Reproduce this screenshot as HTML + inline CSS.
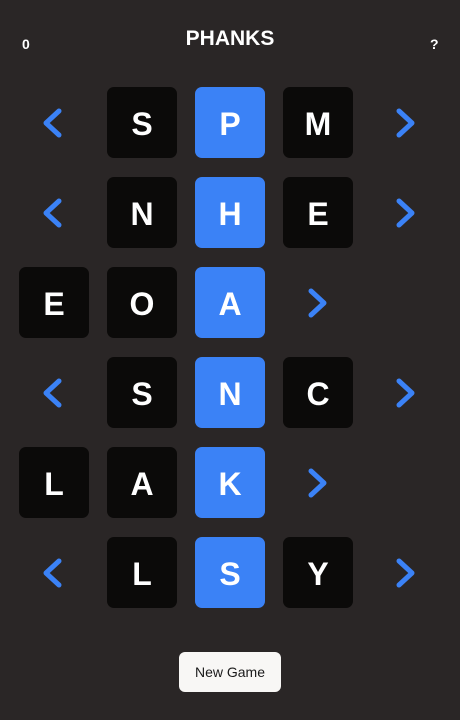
<!DOCTYPE html>
<html><head><style>
body{margin:0;width:460px;height:720px;background:#2a2626;position:relative;overflow:hidden;font-family:"Liberation Sans",sans-serif;color:#fff}
.t{position:absolute;width:70px;height:71px;border-radius:7px;background:#0b0a09;display:flex;align-items:center;justify-content:center;font-size:32px;font-weight:bold;color:#fff;padding-top:4px;box-sizing:border-box}
.b{background:#3b82f6}
svg{position:absolute}
.h{position:absolute;font-weight:bold}
</style></head><body>
<div class="h" style="left:22px;top:36px;font-size:14px">0</div>
<div class="h" style="left:0;width:460px;text-align:center;top:27px;font-size:21px">PHANKS</div>
<div class="h" style="left:430px;top:36px;font-size:14px">?</div>

<div class="t" style="left:107px;top:87px">S</div><div class="t b" style="left:195px;top:87px">P</div><div class="t" style="left:283px;top:87px">M</div>
<div class="t" style="left:107px;top:177px">N</div><div class="t b" style="left:195px;top:177px">H</div><div class="t" style="left:283px;top:177px">E</div>
<div class="t" style="left:19px;top:267px">E</div><div class="t" style="left:107px;top:267px">O</div><div class="t b" style="left:195px;top:267px">A</div>
<div class="t" style="left:107px;top:357px">S</div><div class="t b" style="left:195px;top:357px">N</div><div class="t" style="left:283px;top:357px">C</div>
<div class="t" style="left:19px;top:447px">L</div><div class="t" style="left:107px;top:447px">A</div><div class="t b" style="left:195px;top:447px">K</div>
<div class="t" style="left:107px;top:537px">L</div><div class="t b" style="left:195px;top:537px">S</div><div class="t" style="left:283px;top:537px">Y</div>

<svg width="460" height="720" style="left:0;top:0" fill="none" stroke="#3b82f6" stroke-width="5" stroke-linecap="round" stroke-linejoin="round">
<path d="M59 111 L46 123 L59 135"/><path d="M399 111 L412 123 L399 135"/>
<path d="M59 201 L46 213 L59 225"/><path d="M399 201 L412 213 L399 225"/>
<path d="M311 291 L324 303 L311 315"/>
<path d="M59 381 L46 393 L59 405"/><path d="M399 381 L412 393 L399 405"/>
<path d="M311 471 L324 483 L311 495"/>
<path d="M59 561 L46 573 L59 585"/><path d="M399 561 L412 573 L399 585"/>
</svg>
<div style="position:absolute;left:179px;top:652px;width:102px;height:40px;background:#f8f7f5;border-radius:6px;color:#1a1a1a;font-size:14px;display:flex;align-items:center;justify-content:center">New Game</div>
</body></html>
